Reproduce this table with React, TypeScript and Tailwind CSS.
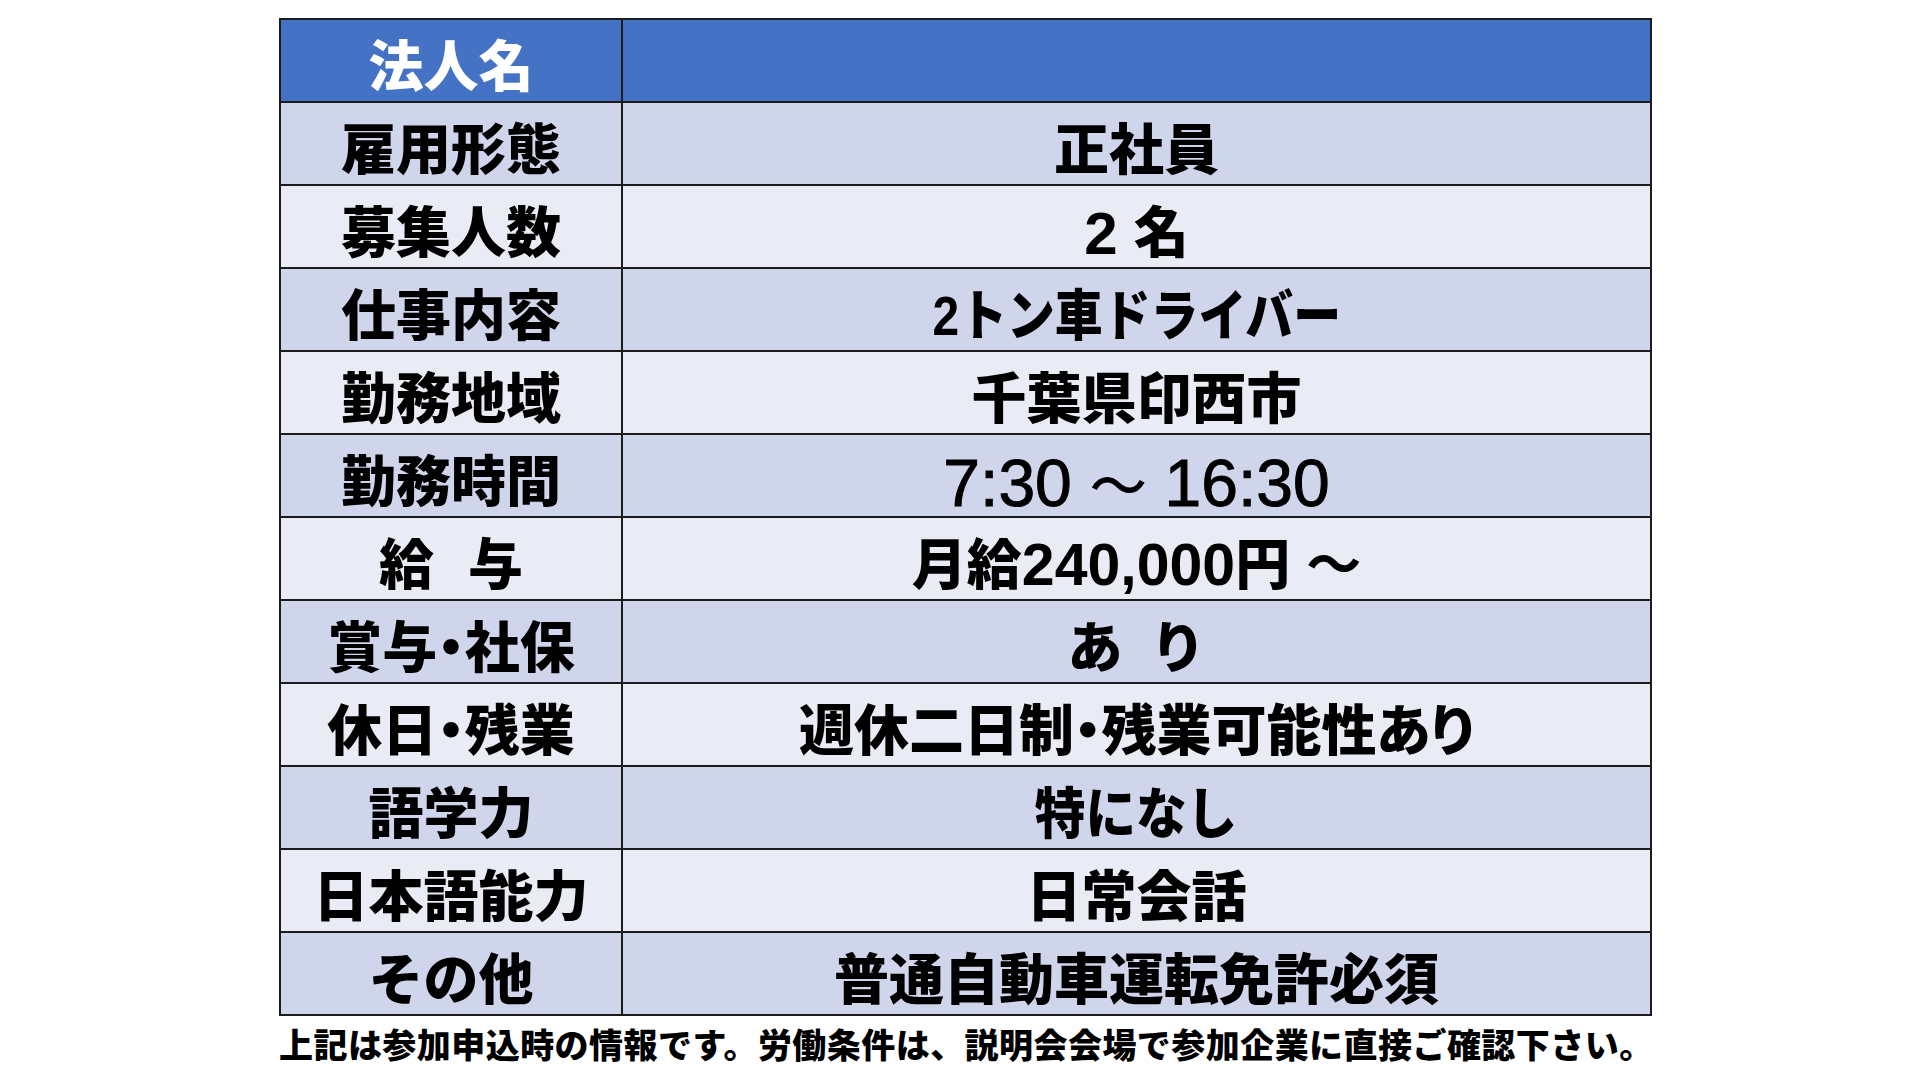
import React from "react";

const font = "font-['Liberation_Sans','Noto_Sans_CJK_JP',sans-serif]";
const dark = "bg-[#cfd5ea]";
const light = "bg-[#e9ebf5]";

type RowProps = {
  label: React.ReactNode;
  children?: React.ReactNode;
  tone: string;
  head?: boolean;
};

const Row = ({ label, children, tone, head }: RowProps) => (
  <div className={`flex h-[83px] border-b-2 border-[#1c1c1c] ${tone}`}>
    <div
      className={`flex w-[342px] shrink-0 items-center justify-center border-r-2 border-[#1c1c1c] pt-[14px] text-[55px] font-black leading-none ${
        head ? "text-white" : "text-black"
      }`}
    >
      {label}
    </div>
    <div className="flex flex-1 items-center justify-center pt-[14px] text-[55px] font-black leading-none text-black">
      {children}
    </div>
  </div>
);

export default function App() {
  return (
    <div className={`min-h-screen w-full bg-white pt-[18px] ${font}`}>
      <div className="ml-[279px] w-[1373px] border-x-2 border-t-2 border-[#1c1c1c]">
        <Row label="法人名" tone="bg-[#4472c4]" head />
        <Row label="雇用形態" tone={dark}>
          正社員
        </Row>
        <Row label="募集人数" tone={light}>
          <span className="mr-[16px] text-[60px] font-bold">2</span>
          <span>名</span>
        </Row>
        <Row label="仕事内容" tone={dark}>
          <span className="inline-block [transform:scaleX(0.87)]">
            <span className="font-bold">2</span>トン車ドライバー
          </span>
        </Row>
        <Row label="勤務地域" tone={light}>
          千葉県印西市
        </Row>
        <Row label="勤務時間" tone={dark}>
          <span className="text-[66px] font-normal [-webkit-text-stroke:1px_black]">
            7:30 <span className="font-['Noto_Sans_CJK_JP'] text-[56px]">～</span> 16:30
          </span>
        </Row>
        <Row
          label={
            <span className="flex gap-[34px]">
              <span>給</span>
              <span>与</span>
            </span>
          }
          tone={light}
        >
          <span>月給</span>
          <span className="text-[59px] font-bold">240,000</span>
          <span>円</span>
          <span className="ml-[16px] font-bold">～</span>
        </Row>
        <Row label={<span className="[font-feature-settings:'palt']">賞与・社保</span>} tone={dark}>
          <span className="flex gap-[28px]">
            <span>あ</span>
            <span>り</span>
          </span>
        </Row>
        <Row label={<span className="[font-feature-settings:'palt']">休日・残業</span>} tone={light}>
          <span className="[font-feature-settings:'palt']">週休二日制・残業可能性あり</span>
        </Row>
        <Row label="語学力" tone={dark}>
          <span className="inline-block [transform:scaleX(0.92)]">特になし</span>
        </Row>
        <Row label="日本語能力" tone={light}>
          日常会話
        </Row>
        <Row label="その他" tone={dark}>
          普通自動車運転免許必須
        </Row>
      </div>
      <p className="ml-[279px] mt-[13px] whitespace-nowrap text-[34px] font-black leading-none tracking-[0.45px] text-black">
        上記は参加申込時の情報です。労働条件は、説明会会場で参加企業に直接ご確認下さい。
      </p>
    </div>
  );
}
